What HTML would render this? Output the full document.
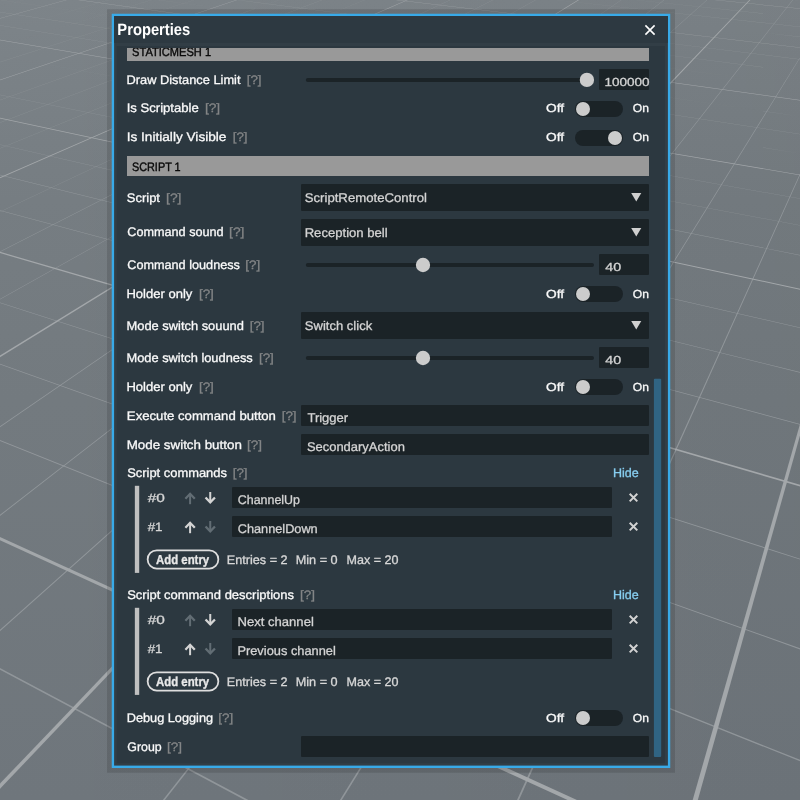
<!DOCTYPE html><html><head><meta charset="utf-8"><title>Properties</title><style>
html,body{margin:0;padding:0;width:800px;height:800px;overflow:hidden;background:#757c81;font-family:"Liberation Sans", sans-serif;}
.bg{position:absolute;left:0;top:0;display:block}
.c{position:absolute;left:0;top:0;width:800px;height:800px;overflow:hidden;will-change:transform}
.c>div,.c>svg{position:absolute;display:block}
.c>span{-webkit-text-stroke:0.3px currentColor; text-rendering:geometricPrecision;position:absolute;white-space:nowrap;transform-origin:0 0;line-height:1;display:block}
</style></head><body>
<svg class="bg" width="800" height="800" viewBox="0 0 800 800"><defs><linearGradient id="fl" x1="0" y1="0" x2="0" y2="1"><stop offset="0" stop-color="#7d8489"/><stop offset="0.25" stop-color="#767d82"/><stop offset="0.5" stop-color="#737a7f"/><stop offset="1" stop-color="#6f767c"/></linearGradient><linearGradient id="fh" x1="0" y1="0" x2="1" y2="0"><stop offset="0" stop-color="#000" stop-opacity="0"/><stop offset="1" stop-color="#000" stop-opacity="0.036"/></linearGradient></defs><rect width="800" height="800" fill="url(#fl)"/><rect width="800" height="800" fill="url(#fh)"/><g fill="#9a9fa3" fill-opacity="0.78"><polygon points="-40.1,-5.2 -39.9,-5.1 103.7,-40.0 103.4,-40.0"/><polygon points="-40.2,5.3 -39.8,5.4 139.5,-40.0 139.2,-40.0"/><polygon points="-40.2,16.8 -39.8,16.8 175.4,-40.0 175.1,-40.0"/><polygon points="-40.2,43.0 -39.8,43.1 247.2,-40.0 246.9,-40.0"/><polygon points="-40.2,58.1 -39.8,58.2 283.1,-40.0 282.8,-40.0"/><polygon points="-40.2,74.9 -39.8,74.9 319.1,-40.0 318.8,-40.0"/><polygon points="-40.2,114.3 -39.8,114.4 391.0,-40.0 390.7,-40.0"/><polygon points="-40.2,137.8 -39.8,138.0 427.1,-40.0 426.7,-40.0"/><polygon points="-40.2,164.6 -39.8,164.7 463.1,-40.0 462.8,-40.0"/><polygon points="-40.3,230.6 -39.7,230.8 535.2,-40.0 534.8,-40.0"/><polygon points="-40.3,272.1 -39.7,272.3 571.3,-40.0 570.9,-40.0"/><polygon points="-40.3,321.4 -39.7,321.6 607.4,-40.0 607.0,-40.0"/><polygon points="-40.4,454.0 -39.6,454.4 679.6,-40.0 679.3,-40.0"/><polygon points="-40.5,546.2 -39.5,546.6 715.8,-40.0 715.4,-40.0"/><polygon points="-40.5,665.9 -39.5,666.5 752.0,-40.0 751.6,-40.0"/><polygon points="824.0,-40.0 824.4,-40.0 133.1,840.4 131.7,839.6"/><polygon points="839.8,-7.0 840.2,-7.0 316.9,840.4 315.4,839.6"/><polygon points="839.7,85.6 840.3,85.7 500.8,840.4 499.1,839.6"/><polygon points="840.0,-10.9 840.0,-10.8 529.1,-40.0 529.2,-40.0"/><polygon points="840.0,-3.5 840.0,-3.4 461.7,-40.0 461.9,-40.0"/><polygon points="840.0,4.4 840.0,4.5 394.5,-40.0 394.6,-40.0"/><polygon points="840.0,21.7 840.0,21.8 260.1,-40.0 260.3,-40.0"/><polygon points="840.0,31.2 840.0,31.3 193.0,-40.0 193.2,-40.0"/><polygon points="840.0,41.4 840.0,41.5 125.9,-40.0 126.2,-40.0"/><polygon points="840.0,64.2 840.0,64.3 -7.9,-40.0 -7.7,-40.0"/><polygon points="-39.9,-35.6 -40.1,-35.5 840.0,77.1 840.0,77.0"/><polygon points="-39.9,-26.5 -40.1,-26.4 840.0,90.9 840.0,90.8"/><polygon points="-39.8,-5.9 -40.2,-5.8 840.0,122.3 840.0,122.2"/><polygon points="-39.8,5.9 -40.2,6.0 840.0,140.3 840.0,140.1"/><polygon points="-39.8,18.9 -40.2,19.0 840.0,160.0 840.0,159.8"/><polygon points="-39.8,49.1 -40.2,49.2 840.0,206.0 840.0,205.7"/><polygon points="-39.8,66.9 -40.2,67.0 840.0,233.0 840.0,232.7"/><polygon points="-39.8,86.8 -40.2,87.0 839.9,263.4 840.1,263.1"/><polygon points="-39.7,135.3 -40.3,135.5 839.9,337.2 840.1,336.7"/><polygon points="-39.7,165.0 -40.3,165.3 839.9,382.5 840.1,382.0"/><polygon points="-39.7,199.7 -40.3,200.0 839.9,435.3 840.1,434.7"/><polygon points="-39.6,289.7 -40.4,290.1 839.9,572.4 840.1,571.5"/><polygon points="-39.6,349.6 -40.4,350.0 839.9,663.6 840.1,662.5"/><polygon points="-39.6,424.2 -40.4,424.8 839.9,777.3 840.1,775.9"/><polygon points="-39.4,647.0 -40.6,648.0 321.3,840.8 322.2,839.2"/><polygon points="-39.3,824.0 -40.7,825.5 -16.8,840.8 -15.4,839.2"/></g><g fill="#a3a7aa"><polygon points="-40.4,29.3 -39.6,29.4 211.5,-40.0 210.8,-40.0"/><polygon points="-40.5,93.4 -39.5,93.6 355.3,-40.0 354.5,-40.0"/><polygon points="-40.7,195.1 -39.3,195.4 499.4,-40.0 498.5,-40.0"/><polygon points="-41.0,380.7 -39.0,381.4 643.8,-40.0 642.9,-40.0"/><polygon points="-41.6,827.1 -38.4,829.2 788.4,-40.0 787.5,-40.0"/><polygon points="838.8,288.1 841.2,288.6 686.3,841.1 681.6,838.9"/><polygon points="840.1,12.7 839.9,12.9 327.1,-39.9 327.6,-40.1"/><polygon points="840.1,52.3 839.9,52.6 58.8,-39.9 59.4,-40.1"/><polygon points="-39.6,-16.7 -40.4,-16.5 839.9,106.1 840.1,105.7"/><polygon points="-39.5,33.1 -40.5,33.4 839.9,182.0 840.1,181.4"/><polygon points="-39.4,109.3 -40.6,109.7 839.9,298.2 840.1,297.2"/><polygon points="-39.2,240.4 -40.8,241.2 839.8,498.2 840.2,496.4"/><polygon points="-38.7,519.3 -41.3,521.3 659.3,842.0 660.5,838.1"/></g><rect x="107" y="9.25" width="568" height="763.5" fill="#000" fill-opacity="0.125"/><rect x="111.75" y="13.75" width="558.5" height="754.25" fill="#38aae8"/><rect x="114.1" y="16.1" width="553.8" height="749.5" fill="#323e46"/><rect x="114.1" y="16.1" width="553.8" height="26.8" fill="#2d3941"/><rect x="116.75" y="46.1" width="548.15" height="717" fill="#2c3840"/></svg>
<div class="c">
<div style="left:127px;top:48px;width:522px;height:13px;background:#999999;"></div>
<svg style="left:300px;top:71px" width="301" height="18" viewBox="0 0 301 18"><g transform="translate(0 0.9)"><rect x="5.8" y="6" width="288.2" height="4" rx="2" fill="#1b2327"/><circle cx="286.9" cy="8" r="7.15" fill="#cccccc"/></g></svg>
<div style="left:599px;top:69px;width:50px;height:21px;background:#1b2327;border-radius:1px;"></div>
<div style="left:575px;top:100.8px;width:48.3px;height:16px;background:#1b2327;border-radius:8px;"></div>
<div style="left:575.9px;top:101.5px;width:14.6px;height:14.6px;background:#cccccc;border-radius:50%;"></div>
<div style="left:575px;top:130px;width:48.3px;height:16px;background:#1b2327;border-radius:8px;"></div>
<div style="left:607.8px;top:130.7px;width:14.6px;height:14.6px;background:#cccccc;border-radius:50%;"></div>
<div style="left:127px;top:156px;width:522px;height:20px;background:#999999;"></div>
<div style="left:301px;top:184px;width:348px;height:27px;background:#1b2327;border-radius:1px;"></div>
<svg style="left:631px;top:192px" width="11" height="10" viewBox="0 0 11 10"><polygon points="0.2,1.0 10.3,1.0 5.25,9.5" fill="#cfcfcf"/></svg>
<div style="left:301px;top:219px;width:348px;height:27px;background:#1b2327;border-radius:1px;"></div>
<svg style="left:631px;top:227px" width="11" height="10" viewBox="0 0 11 10"><polygon points="0.2,1.0 10.3,1.0 5.25,9.5" fill="#cfcfcf"/></svg>
<svg style="left:300px;top:257px" width="301" height="17" viewBox="0 0 301 17"><g transform="translate(0 0)"><rect x="5.8" y="6" width="288.2" height="4" rx="2" fill="#1b2327"/><circle cx="123" cy="8" r="7.15" fill="#cccccc"/></g></svg>
<div style="left:599px;top:254px;width:50px;height:21px;background:#1b2327;border-radius:1px;"></div>
<div style="left:575px;top:286px;width:48.3px;height:16px;background:#1b2327;border-radius:8px;"></div>
<div style="left:575.9px;top:286.7px;width:14.6px;height:14.6px;background:#cccccc;border-radius:50%;"></div>
<div style="left:301px;top:312px;width:348px;height:27px;background:#1b2327;border-radius:1px;"></div>
<svg style="left:631px;top:320px" width="11" height="10" viewBox="0 0 11 10"><polygon points="0.2,1.0 10.3,1.0 5.25,9.5" fill="#cfcfcf"/></svg>
<svg style="left:300px;top:350px" width="301" height="17" viewBox="0 0 301 17"><g transform="translate(0 0)"><rect x="5.8" y="6" width="288.2" height="4" rx="2" fill="#1b2327"/><circle cx="123" cy="8" r="7.15" fill="#cccccc"/></g></svg>
<div style="left:599px;top:347px;width:50px;height:21px;background:#1b2327;border-radius:1px;"></div>
<div style="left:575px;top:379.2px;width:48.3px;height:16px;background:#1b2327;border-radius:8px;"></div>
<div style="left:575.9px;top:379.9px;width:14.6px;height:14.6px;background:#cccccc;border-radius:50%;"></div>
<div style="left:301px;top:405px;width:348px;height:21px;background:#1b2327;border-radius:1px;"></div>
<div style="left:301px;top:434px;width:348px;height:21px;background:#1b2327;border-radius:1px;"></div>
<svg style="left:130px;top:482px" width="14" height="96" viewBox="0 0 14 96"><rect x="4.85" y="3.8" width="4.35" height="87.1" fill="#c0c0c0"/></svg>
<svg style="left:184px;top:491px" width="13" height="15" viewBox="0 0 13 15"><g transform="translate(0.4 0.9)"><g fill="none" stroke="#626d74"><path d="M5.7 12.3V1.8" stroke-width="2"/><path d="M1 6.8 5.7 1.9 10.4 6.8" stroke-width="2.3"/></g></g></svg>
<svg style="left:204px;top:491px" width="13" height="15" viewBox="0 0 13 15"><g transform="translate(0.55 0.9)"><g fill="none" stroke="#d4d4d4"><path d="M5.7 0.1V10.6" stroke-width="2"/><path d="M1 5.6 5.7 10.5 10.4 5.6" stroke-width="2.3"/></g></g></svg>
<div style="left:232px;top:487px;width:380px;height:21px;background:#1b2327;border-radius:1px;"></div>
<svg style="left:628px;top:492px" width="12" height="12" viewBox="0 0 12 12"><g transform="translate(0.7 0.8)"><path d="M1 1L8.6 8.6M1 8.6L8.6 1" stroke="#d2d2d2" stroke-width="2" fill="none"/></g></svg>
<svg style="left:184px;top:520px" width="13" height="15" viewBox="0 0 13 15"><g transform="translate(0.4 0.9)"><g fill="none" stroke="#d4d4d4"><path d="M5.7 12.3V1.8" stroke-width="2"/><path d="M1 6.8 5.7 1.9 10.4 6.8" stroke-width="2.3"/></g></g></svg>
<svg style="left:204px;top:520px" width="13" height="15" viewBox="0 0 13 15"><g transform="translate(0.55 0.9)"><g fill="none" stroke="#626d74"><path d="M5.7 0.1V10.6" stroke-width="2"/><path d="M1 5.6 5.7 10.5 10.4 5.6" stroke-width="2.3"/></g></g></svg>
<div style="left:232px;top:516px;width:380px;height:21px;background:#1b2327;border-radius:1px;"></div>
<svg style="left:628px;top:521px" width="12" height="12" viewBox="0 0 12 12"><g transform="translate(0.7 0.8)"><path d="M1 1L8.6 8.6M1 8.6L8.6 1" stroke="#d2d2d2" stroke-width="2" fill="none"/></g></svg>
<svg style="left:144px;top:547px" width="80" height="26" viewBox="0 0 80 26"><rect x="3.65" y="3.3" width="70.7" height="18.3" rx="9.15" fill="none" stroke="#dedede" stroke-width="1.8"/></svg>
<svg style="left:130px;top:604px" width="14" height="96" viewBox="0 0 14 96"><rect x="4.85" y="3.8" width="4.35" height="87.1" fill="#c0c0c0"/></svg>
<svg style="left:184px;top:613px" width="13" height="15" viewBox="0 0 13 15"><g transform="translate(0.4 0.9)"><g fill="none" stroke="#626d74"><path d="M5.7 12.3V1.8" stroke-width="2"/><path d="M1 6.8 5.7 1.9 10.4 6.8" stroke-width="2.3"/></g></g></svg>
<svg style="left:204px;top:613px" width="13" height="15" viewBox="0 0 13 15"><g transform="translate(0.55 0.9)"><g fill="none" stroke="#d4d4d4"><path d="M5.7 0.1V10.6" stroke-width="2"/><path d="M1 5.6 5.7 10.5 10.4 5.6" stroke-width="2.3"/></g></g></svg>
<div style="left:232px;top:609px;width:380px;height:21px;background:#1b2327;border-radius:1px;"></div>
<svg style="left:628px;top:614px" width="12" height="12" viewBox="0 0 12 12"><g transform="translate(0.7 0.8)"><path d="M1 1L8.6 8.6M1 8.6L8.6 1" stroke="#d2d2d2" stroke-width="2" fill="none"/></g></svg>
<svg style="left:184px;top:642px" width="13" height="15" viewBox="0 0 13 15"><g transform="translate(0.4 0.9)"><g fill="none" stroke="#d4d4d4"><path d="M5.7 12.3V1.8" stroke-width="2"/><path d="M1 6.8 5.7 1.9 10.4 6.8" stroke-width="2.3"/></g></g></svg>
<svg style="left:204px;top:642px" width="13" height="15" viewBox="0 0 13 15"><g transform="translate(0.55 0.9)"><g fill="none" stroke="#626d74"><path d="M5.7 0.1V10.6" stroke-width="2"/><path d="M1 5.6 5.7 10.5 10.4 5.6" stroke-width="2.3"/></g></g></svg>
<div style="left:232px;top:638px;width:380px;height:21px;background:#1b2327;border-radius:1px;"></div>
<svg style="left:628px;top:643px" width="12" height="12" viewBox="0 0 12 12"><g transform="translate(0.7 0.8)"><path d="M1 1L8.6 8.6M1 8.6L8.6 1" stroke="#d2d2d2" stroke-width="2" fill="none"/></g></svg>
<svg style="left:144px;top:669px" width="80" height="26" viewBox="0 0 80 26"><rect x="3.65" y="3.3" width="70.7" height="18.3" rx="9.15" fill="none" stroke="#dedede" stroke-width="1.8"/></svg>
<div style="left:575px;top:710px;width:48.3px;height:16px;background:#1b2327;border-radius:8px;"></div>
<div style="left:575.9px;top:710.7px;width:14.6px;height:14.6px;background:#cccccc;border-radius:50%;"></div>
<div style="left:301px;top:736px;width:348px;height:21px;background:#1b2327;border-radius:1px;"></div>
<svg style="left:650px;top:375px" width="16" height="390" viewBox="0 0 16 390"><rect x="3.9" y="3.8" width="7.3" height="378.2" rx="1" fill="#306483"/></svg>
<svg style="left:644px;top:24px" width="13" height="13" viewBox="0 0 13 13"><g transform="translate(0.4 0.4)"><path d="M1 1L10.2 10.2M1 10.2L10.2 1" stroke="#ffffff" stroke-width="1.6" fill="none"/></g></svg>
<span style="left:132px;top:46px;font-size:12.2px;font-weight:400;color:#0a0a0a;transform:translate(0.05px,0.00px) scaleX(0.9099);clip-path:inset(2px 0 0 0);-webkit-text-stroke:0.4px #0a0a0a;">STATICMESH 1</span>
<span style="left:126px;top:74px;font-size:12.4px;font-weight:400;color:#fafafa;transform:translate(0.54px,0.00px) scaleX(1.0341);">Draw Distance Limit</span>
<span style="left:246px;top:74px;font-size:12.2px;font-weight:400;color:#838586;transform:translate(0.68px,0.00px) scaleX(1.0933);">[?]</span>
<span style="left:604px;top:77px;font-size:11.7px;font-weight:400;color:#d4d4d4;transform:translate(0.43px,0.00px) scaleX(1.1553);">100000</span>
<span style="left:126px;top:102px;font-size:12.4px;font-weight:400;color:#fafafa;transform:translate(0.73px,0.00px) scaleX(1.0562);">Is Scriptable</span>
<span style="left:204px;top:102px;font-size:12.2px;font-weight:400;color:#838586;transform:translate(0.92px,0.00px) scaleX(1.1253);">[?]</span>
<span style="left:546px;top:103px;font-size:11.7px;font-weight:400;color:#fafafa;transform:translate(0.12px,0.00px) scaleX(1.1721);">Off</span>
<span style="left:632px;top:103px;font-size:11.7px;font-weight:400;color:#fafafa;transform:translate(0.82px,0.00px) scaleX(1.0352);">On</span>
<span style="left:126px;top:131px;font-size:12.4px;font-weight:400;color:#fafafa;transform:translate(0.67px,0.00px) scaleX(1.1003);">Is Initially Visible</span>
<span style="left:232px;top:131px;font-size:12.2px;font-weight:400;color:#838586;transform:translate(0.68px,0.00px) scaleX(1.0933);">[?]</span>
<span style="left:546px;top:132px;font-size:11.7px;font-weight:400;color:#fafafa;transform:translate(0.12px,0.00px) scaleX(1.1721);">Off</span>
<span style="left:632px;top:132px;font-size:11.7px;font-weight:400;color:#fafafa;transform:translate(0.82px,0.00px) scaleX(1.0352);">On</span>
<span style="left:131px;top:161px;font-size:12.2px;font-weight:400;color:#0a0a0a;transform:translate(0.94px,0.00px) scaleX(0.8910);-webkit-text-stroke:0.4px #0a0a0a;">SCRIPT 1</span>
<span style="left:126px;top:192px;font-size:12.4px;font-weight:400;color:#fafafa;transform:translate(0.76px,0.00px) scaleX(1.0482);">Script</span>
<span style="left:166px;top:192px;font-size:12.2px;font-weight:400;color:#838586;transform:translate(0.07px,0.00px) scaleX(1.1335);">[?]</span>
<span style="left:304px;top:192px;font-size:12.6px;font-weight:400;color:#d4d4d4;transform:translate(0.69px,0.00px) scaleX(1.0463);">ScriptRemoteControl</span>
<span style="left:127px;top:226px;font-size:12.4px;font-weight:400;color:#fafafa;transform:translate(0.24px,0.00px) scaleX(1.0213);">Command sound</span>
<span style="left:229px;top:226px;font-size:12.2px;font-weight:400;color:#838586;transform:translate(0.07px,0.00px) scaleX(1.1335);">[?]</span>
<span style="left:304px;top:227px;font-size:12.6px;font-weight:400;color:#d4d4d4;transform:translate(0.65px,0.00px) scaleX(1.0396);">Reception bell</span>
<span style="left:127px;top:259px;font-size:12.4px;font-weight:400;color:#fafafa;transform:translate(0.23px,0.00px) scaleX(1.0223);">Command loudness</span>
<span style="left:245px;top:259px;font-size:12.2px;font-weight:400;color:#838586;transform:translate(0.35px,0.00px) scaleX(1.0969);">[?]</span>
<span style="left:605px;top:262px;font-size:11.7px;font-weight:400;color:#d4d4d4;transform:translate(0.26px,0.00px) scaleX(1.2217);">40</span>
<span style="left:126px;top:288px;font-size:12.4px;font-weight:400;color:#fafafa;transform:translate(0.46px,0.00px) scaleX(1.0520);">Holder only</span>
<span style="left:198px;top:288px;font-size:12.2px;font-weight:400;color:#838586;transform:translate(0.91px,0.00px) scaleX(1.0983);">[?]</span>
<span style="left:546px;top:289px;font-size:11.7px;font-weight:400;color:#fafafa;transform:translate(0.12px,0.00px) scaleX(1.1721);">Off</span>
<span style="left:632px;top:289px;font-size:11.7px;font-weight:400;color:#fafafa;transform:translate(0.82px,0.00px) scaleX(1.0352);">On</span>
<span style="left:126px;top:320px;font-size:12.4px;font-weight:400;color:#fafafa;transform:translate(0.51px,0.00px) scaleX(1.0393);">Mode switch souund</span>
<span style="left:249px;top:320px;font-size:12.2px;font-weight:400;color:#838586;transform:translate(0.68px,0.00px) scaleX(1.0933);">[?]</span>
<span style="left:304px;top:320px;font-size:12.6px;font-weight:400;color:#d4d4d4;transform:translate(0.84px,0.00px) scaleX(1.0349);">Switch click</span>
<span style="left:126px;top:352px;font-size:12.4px;font-weight:400;color:#fafafa;transform:translate(0.53px,0.00px) scaleX(1.0352);">Mode switch loudness</span>
<span style="left:258px;top:352px;font-size:12.2px;font-weight:400;color:#838586;transform:translate(0.91px,0.00px) scaleX(1.0983);">[?]</span>
<span style="left:605px;top:355px;font-size:11.7px;font-weight:400;color:#d4d4d4;transform:translate(0.26px,0.00px) scaleX(1.2217);">40</span>
<span style="left:126px;top:381px;font-size:12.4px;font-weight:400;color:#fafafa;transform:translate(0.46px,0.00px) scaleX(1.0520);">Holder only</span>
<span style="left:198px;top:381px;font-size:12.2px;font-weight:400;color:#838586;transform:translate(0.91px,0.00px) scaleX(1.0983);">[?]</span>
<span style="left:546px;top:382px;font-size:11.7px;font-weight:400;color:#fafafa;transform:translate(0.12px,0.00px) scaleX(1.1721);">Off</span>
<span style="left:632px;top:382px;font-size:11.7px;font-weight:400;color:#fafafa;transform:translate(0.82px,0.00px) scaleX(1.0352);">On</span>
<span style="left:126px;top:410px;font-size:12.4px;font-weight:400;color:#fafafa;transform:translate(0.87px,0.00px) scaleX(1.0609);">Execute command button</span>
<span style="left:281px;top:410px;font-size:12.2px;font-weight:400;color:#838586;transform:translate(0.68px,0.00px) scaleX(1.0933);">[?]</span>
<span style="left:307px;top:412px;font-size:12.6px;font-weight:400;color:#d4d4d4;transform:translate(0.40px,0.00px) scaleX(1.0351);">Trigger</span>
<span style="left:126px;top:439px;font-size:12.4px;font-weight:400;color:#fafafa;transform:translate(0.72px,0.00px) scaleX(1.0782);">Mode switch button</span>
<span style="left:247px;top:439px;font-size:12.2px;font-weight:400;color:#838586;transform:translate(0.02px,0.00px) scaleX(1.0997);">[?]</span>
<span style="left:306px;top:441px;font-size:12.6px;font-weight:400;color:#d4d4d4;transform:translate(0.88px,0.00px) scaleX(1.0290);">SecondaryAction</span>
<span style="left:127px;top:467px;font-size:12.4px;font-weight:400;color:#fafafa;transform:translate(0.13px,0.00px) scaleX(1.0425);">Script commands</span>
<span style="left:232px;top:467px;font-size:12.2px;font-weight:400;color:#838586;transform:translate(0.68px,0.00px) scaleX(1.0933);">[?]</span>
<span style="left:612px;top:467px;font-size:12.4px;font-weight:400;color:#87cef0;transform:translate(0.94px,0.00px) scaleX(1.0088);">Hide</span>
<span style="left:147px;top:492px;font-size:12px;font-weight:400;color:#d6d6d6;transform:translate(0.75px,0.00px) scaleX(1.2835);">#0</span>
<span style="left:237px;top:494px;font-size:12.6px;font-weight:400;color:#d4d4d4;transform:translate(0.79px,0.00px) scaleX(0.9870);">ChannelUp</span>
<span style="left:147px;top:521px;font-size:12px;font-weight:400;color:#d6d6d6;transform:translate(0.66px,0.00px) scaleX(1.1101);">#1</span>
<span style="left:237px;top:523px;font-size:12.6px;font-weight:400;color:#d4d4d4;transform:translate(0.74px,0.00px) scaleX(1.0105);">ChannelDown</span>
<span style="left:155px;top:553px;font-size:13px;font-weight:700;color:#e8e8e8;transform:translate(0.95px,0.00px) scaleX(0.8779);">Add entry</span>
<span style="left:226px;top:554px;font-size:12.4px;font-weight:400;color:#d8d8d8;transform:translate(0.83px,0.00px) scaleX(1.0191);">Entries = 2</span>
<span style="left:295px;top:554px;font-size:12.4px;font-weight:400;color:#d8d8d8;transform:translate(0.73px,0.00px) scaleX(1.0230);">Min = 0</span>
<span style="left:346px;top:554px;font-size:12.4px;font-weight:400;color:#d8d8d8;transform:translate(0.47px,0.00px) scaleX(1.0120);">Max = 20</span>
<span style="left:127px;top:589px;font-size:12.4px;font-weight:400;color:#fafafa;transform:translate(0.15px,0.00px) scaleX(1.0487);">Script command descriptions</span>
<span style="left:300px;top:589px;font-size:12.2px;font-weight:400;color:#838586;transform:translate(0.02px,0.00px) scaleX(1.0997);">[?]</span>
<span style="left:612px;top:589px;font-size:12.4px;font-weight:400;color:#87cef0;transform:translate(0.94px,0.00px) scaleX(1.0088);">Hide</span>
<span style="left:147px;top:614px;font-size:12px;font-weight:400;color:#d6d6d6;transform:translate(0.75px,0.00px) scaleX(1.2835);">#0</span>
<span style="left:237px;top:616px;font-size:12.6px;font-weight:400;color:#d4d4d4;transform:translate(0.47px,0.00px) scaleX(1.0388);">Next channel</span>
<span style="left:147px;top:643px;font-size:12px;font-weight:400;color:#d6d6d6;transform:translate(0.66px,0.00px) scaleX(1.1101);">#1</span>
<span style="left:237px;top:645px;font-size:12.6px;font-weight:400;color:#d4d4d4;transform:translate(0.40px,0.00px) scaleX(1.0187);">Previous channel</span>
<span style="left:155px;top:675px;font-size:13px;font-weight:700;color:#e8e8e8;transform:translate(0.95px,0.00px) scaleX(0.8779);">Add entry</span>
<span style="left:226px;top:676px;font-size:12.4px;font-weight:400;color:#d8d8d8;transform:translate(0.83px,0.00px) scaleX(1.0191);">Entries = 2</span>
<span style="left:295px;top:676px;font-size:12.4px;font-weight:400;color:#d8d8d8;transform:translate(0.73px,0.00px) scaleX(1.0230);">Min = 0</span>
<span style="left:346px;top:676px;font-size:12.4px;font-weight:400;color:#d8d8d8;transform:translate(0.47px,0.00px) scaleX(1.0120);">Max = 20</span>
<span style="left:126px;top:712px;font-size:12.4px;font-weight:400;color:#fafafa;transform:translate(0.73px,0.00px) scaleX(1.0269);">Debug Logging</span>
<span style="left:218px;top:712px;font-size:12.2px;font-weight:400;color:#838586;transform:translate(0.35px,0.00px) scaleX(1.0969);">[?]</span>
<span style="left:546px;top:713px;font-size:11.7px;font-weight:400;color:#fafafa;transform:translate(0.12px,0.00px) scaleX(1.1721);">Off</span>
<span style="left:632px;top:713px;font-size:11.7px;font-weight:400;color:#fafafa;transform:translate(0.82px,0.00px) scaleX(1.0352);">On</span>
<span style="left:127px;top:741px;font-size:12.4px;font-weight:400;color:#fafafa;transform:translate(0.29px,0.00px) scaleX(0.9967);">Group</span>
<span style="left:167px;top:741px;font-size:12.2px;font-weight:400;color:#838586;transform:translate(0.02px,0.00px) scaleX(1.0997);">[?]</span>
<span style="left:117px;top:22px;font-size:16.5px;font-weight:700;color:#ffffff;transform:translate(0.35px,0.00px) scaleX(0.8933);-webkit-text-stroke:0;">Properties</span>
</div></body></html>
